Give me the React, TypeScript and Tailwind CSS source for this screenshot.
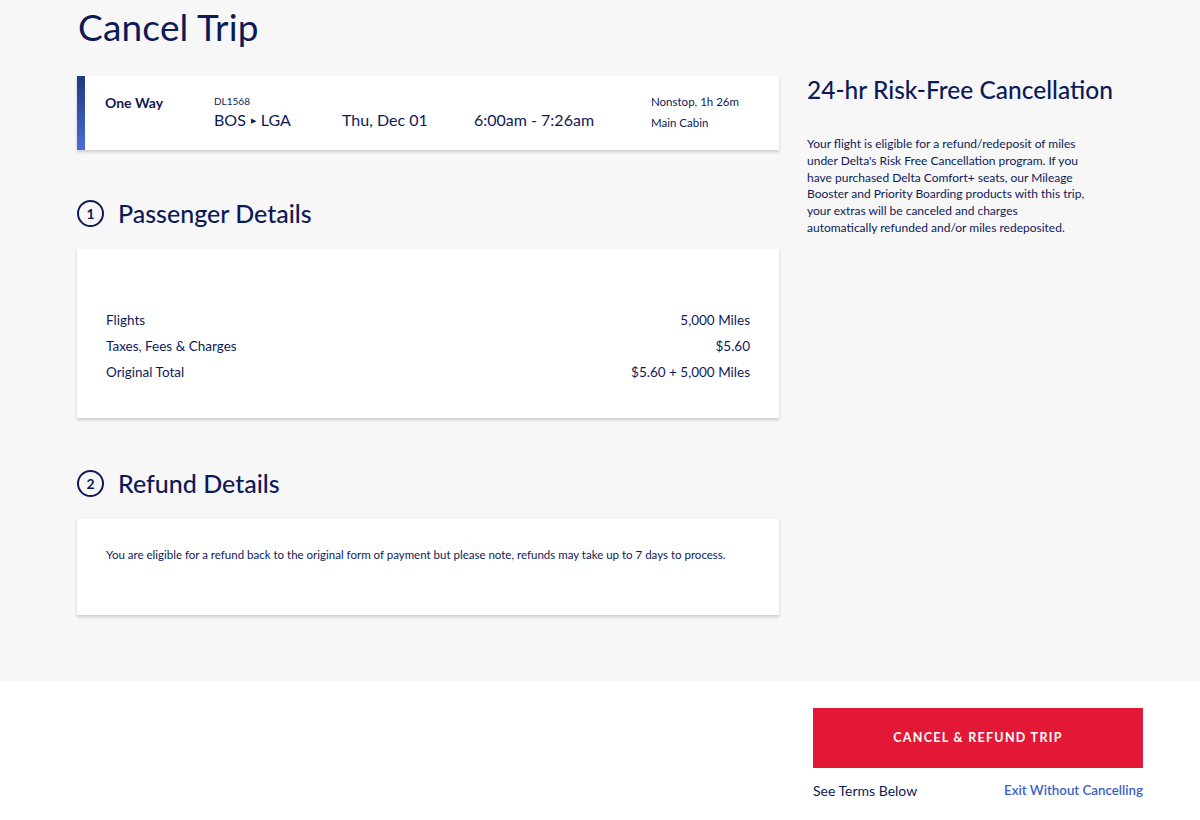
import React from 'react';

const navy = 'text-[#0e1a58]';

const StepTitle = ({ n, title }: { n: number; title: string }) => (
  <div className="flex items-center gap-[14px]">
    <div className="flex h-[27px] w-[27px] items-center justify-center rounded-full border-2 border-[#0e1a58] text-[14px] font-bold leading-none">
      {n}
    </div>
    <h2 className="text-[25px] font-medium leading-none">{title}</h2>
  </div>
);

export default function App() {
  const rows = [
    { label: 'Flights', value: '5,000 Miles' },
    { label: 'Taxes, Fees & Charges', value: '$5.60' },
    { label: 'Original Total', value: '$5.60 + 5,000 Miles' },
  ];

  return (
    <div className={`min-h-screen w-full bg-white ${navy}`} style={{ fontFamily: 'Lato, "Open Sans", sans-serif' }}>
      <div className="bg-[#f7f7f7] pb-[66px]">
        <div className="ml-[77px] w-[1066px]">
          <h1 className="pt-[5px] pl-[1px] text-[37px] font-normal leading-[43px] tracking-[0.2px]">Cancel Trip</h1>

          <div className="mt-[28px] flex gap-[28px]">
            {/* left column */}
            <div className="w-[702px] shrink-0">
              <div className="flex h-[74px] bg-white shadow-[0_2px_3px_rgba(0,0,0,0.18)]">
                <div className="w-[8px] bg-gradient-to-b from-[#1c3a7e] to-[#4d6cd8]" />
                <div className="flex flex-1 pt-[19px]">
                  <div className="-mt-[3px] w-[129px] pl-[20px] text-[14px] font-bold">One Way</div>
                  <div className="w-[128px]">
                    <div className="text-[10px] leading-[12px]">DL1568</div>
                    <div className="mt-[3px] flex items-center text-[16px] leading-[20px]">
                      BOS
                      <span className="mx-[5px] text-[7px]">&#9654;</span>
                      LGA
                    </div>
                  </div>
                  <div className="w-[132px] pt-[15px] text-[16px] leading-[20px]">Thu, Dec 01</div>
                  <div className="w-[177px] pt-[15px] text-[16px] leading-[20px]">6:00am - 7:26am</div>
                  <div className="text-[11.5px] leading-[20px]">
                    <div className="-mt-[3px]">Nonstop, 1h 26m</div>
                    <div className="mt-[1px]">Main Cabin</div>
                  </div>
                </div>
              </div>

              <div className="mt-[50px]">
                <StepTitle n={1} title="Passenger Details" />
              </div>

              <div className="mt-[22px] h-[169px] bg-white px-[29px] pt-[58px] shadow-[0_2px_3px_rgba(0,0,0,0.18)]">
                {rows.map((r) => (
                  <div key={r.label} className="flex h-[26px] items-center justify-between text-[13.5px]">
                    <span>{r.label}</span>
                    <span>{r.value}</span>
                  </div>
                ))}
              </div>

              <div className="mt-[52px]">
                <StepTitle n={2} title="Refund Details" />
              </div>

              <div className="mt-[22px] h-[96px] bg-white px-[29px] pt-[28px] text-[11.5px] leading-[16px] shadow-[0_2px_3px_rgba(0,0,0,0.18)]">
                You are eligible for a refund back to the original form of payment but please note, refunds may take up to 7 days to process.
              </div>
            </div>

            {/* right column */}
            <div className="w-[336px]">
              <h3 className="text-[24.5px] font-medium leading-[28px]">24-hr Risk-Free Cancellation</h3>
              <p className="mt-[32px] w-[280px] text-[12px] leading-[16.8px]">
                Your flight is eligible for a refund/redeposit of miles under Delta's Risk Free Cancellation program. If you have purchased Delta Comfort+ seats, our Mileage Booster and Priority Boarding products with this trip, your extras will be canceled and charges automatically refunded and/or miles redeposited.
              </p>
            </div>
          </div>
        </div>
      </div>

      <div className="flex pt-[27px]">
        <div className="ml-[813px] w-[330px]">
          <button className="flex h-[60px] w-full items-center justify-center bg-[#e31837] text-[12.5px] font-bold tracking-[1.3px] text-white">
            CANCEL &amp; REFUND TRIP
          </button>
          <div className="mt-[12px] flex items-center justify-between text-[14px]">
            <span>See Terms Below</span>
            <span className="text-[13.3px] font-semibold text-[#3c61c6]">Exit Without Cancelling</span>
          </div>
        </div>
      </div>
    </div>
  );
}
